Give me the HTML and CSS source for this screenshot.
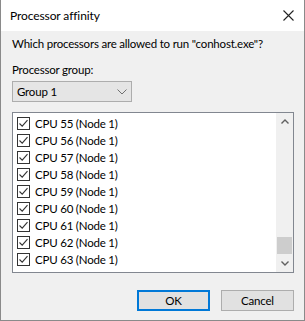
FILE: index.html
```html
<!DOCTYPE html>
<html lang="en">
<head>
    <meta charset="UTF-8">
    <title>Processor affinity</title>
    <link rel="stylesheet" href="styles.css">
</head>
<body>
<div class="window">
    <div class="titlebar">
        <span class="title">Processor affinity</span>
        <svg class="close" width="11" height="11" viewBox="0 0 11 11"><path d="M0.5 0.5 L10.5 10.5 M10.5 0.5 L0.5 10.5" stroke="#222" stroke-width="1.1" fill="none"/></svg>
    </div>
    <div class="content">
        <p class="prompt">Which processors are allowed to run "conhost.exe"?</p>
        <p class="label">Processor group:</p>
        <div class="combo">
            <span>Group 1</span>
            <svg width="10" height="6" viewBox="0 0 10 6"><path d="M0.5 0.5 L5 5 L9.5 0.5" stroke="#707070" stroke-width="1" fill="none"/></svg>
        </div>
        <div class="listbox">
            <div class="items">
                <div class="item"><span class="check"></span>CPU 55 (Node 1)</div>
                <div class="item"><span class="check"></span>CPU 56 (Node 1)</div>
                <div class="item"><span class="check"></span>CPU 57 (Node 1)</div>
                <div class="item"><span class="check"></span>CPU 58 (Node 1)</div>
                <div class="item"><span class="check"></span>CPU 59 (Node 1)</div>
                <div class="item"><span class="check"></span>CPU 60 (Node 1)</div>
                <div class="item"><span class="check"></span>CPU 61 (Node 1)</div>
                <div class="item"><span class="check"></span>CPU 62 (Node 1)</div>
                <div class="item"><span class="check"></span>CPU 63 (Node 1)</div>
            </div>
            <div class="scrollbar">
                <svg class="arrow" width="8" height="5" viewBox="0 0 8 5"><path d="M0.5 4.5 L4 1 L7.5 4.5" stroke="#606060" stroke-width="1.4" fill="none"/></svg>
                <div class="track"><div class="thumb"></div></div>
                <svg class="arrow" width="8" height="5" viewBox="0 0 8 5"><path d="M0.5 0.5 L4 4 L7.5 0.5" stroke="#606060" stroke-width="1.4" fill="none"/></svg>
            </div>
        </div>
        <div class="buttons">
            <button class="btn default">OK</button>
            <button class="btn">Cancel</button>
        </div>
    </div>
</div>
</body>
</html>
```

FILE: styles.css
```css
body {
    margin: 0;
    background: #f0f0f0;
    font-family: Lato, "Noto Sans", sans-serif;
    font-size: 11.5px;
    letter-spacing: -0.2px;
    color: #000;
}

.window {
    width: 305px;
    height: 321px;
    box-sizing: border-box;
    border: 1px solid #8a8a8a;
    border-top: none;
    background: #f0f0f0;
    overflow: hidden;
}

.titlebar {
    height: 31px;
    background: #fff;
    display: flex;
    align-items: center;
    justify-content: space-between;
    padding: 0 10px 0 9px;
}

.title {
    font-size: 12px;
    letter-spacing: -0.1px;
    margin-top: -1px;
}

.close {
    margin-top: -1px;
}

.content {
    padding: 0 10px 0 11px;
}

.prompt {
    margin: 5px 0 0;
    line-height: 16px;
    white-space: nowrap;
}

.label {
    margin: 10px 0 0;
    line-height: 16px;
}

.combo {
    margin-top: 3px;
    width: 120px;
    height: 21px;
    box-sizing: border-box;
    border: 1px solid #adadad;
    background: #e5e5e5;
    display: flex;
    align-items: center;
    justify-content: space-between;
    padding: 0 4px 0 4px;
}

.listbox {
    margin-top: 10px;
    height: 161px;
    box-sizing: border-box;
    border: 1px solid #828790;
    background: #fff;
    display: flex;
}

.items {
    flex: 1;
    padding: 2px 0 0 4px;
}

.item {
    height: 17px;
    display: flex;
    align-items: center;
    gap: 5px;
    white-space: nowrap;
}

.check {
    width: 13px;
    height: 13px;
    box-sizing: border-box;
    border: 1px solid #333;
    background: #fff url("data:image/svg+xml,%3Csvg xmlns='http://www.w3.org/2000/svg' width='11' height='11'%3E%3Cpath d='M1.5 5.5 L4.2 8.2 L9.5 2.2' stroke='%23333' stroke-width='1.1' fill='none'/%3E%3C/svg%3E") no-repeat center;
}

.scrollbar {
    width: 17px;
    background: #f0f0f0;
    display: flex;
    flex-direction: column;
    align-items: center;
}

.arrow {
    flex: none;
    margin: 6px 0;
}

.track {
    flex: 1;
    width: 100%;
    display: flex;
    flex-direction: column;
    justify-content: flex-end;
}

.thumb {
    height: 17px;
    margin: 0 1px 1px;
    background: #cdcdcd;
}

.buttons {
    margin-top: 17px;
    display: flex;
    justify-content: flex-end;
    gap: 11px;
}

.btn {
    width: 73px;
    height: 21px;
    box-sizing: border-box;
    border: 1px solid #adadad;
    background: #e1e1e1;
    font-family: inherit;
    font-size: 11.5px;
    letter-spacing: -0.2px;
    padding: 0;
}

.btn.default {
    border: 2px solid #0078d7;
}
```
